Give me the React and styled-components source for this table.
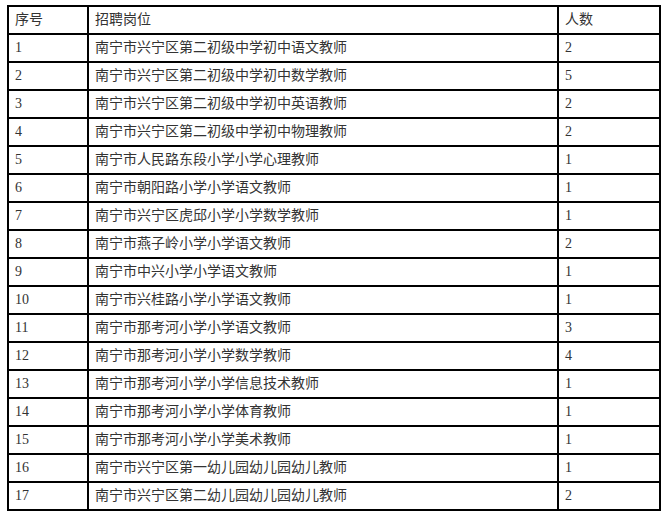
import React from "react";
import styled, { createGlobalStyle } from "styled-components";

const GlobalStyle = createGlobalStyle`
  html, body {
    margin: 0;
    padding: 0;
    background: #fff;
  }
`;

const Page = styled.div`
  padding: 5px 0 0 7px;
`;

const Table = styled.table`
  border-collapse: separate;
  border-spacing: 0;
  table-layout: fixed;
  width: 654px;
  font-family: "Liberation Serif", "Noto Sans CJK SC", serif;
  font-size: 14px;
  color: #333;
`;

const Cell = styled.td`
  box-sizing: border-box;
  height: ${(props) => (props.head ? 30 : 28)}px;
  padding: 0 6px;
  border-right: 2px solid #000;
  border-bottom: 2px solid #000;
  border-top: ${(props) => (props.head ? "2px solid #000" : "none")};
  border-left: ${(props) => (props.first ? "2px solid #000" : "none")};
  vertical-align: middle;
  text-align: left;
  font-weight: normal;
  line-height: 20px;
  white-space: nowrap;
`;

const rows = [
  ["1", "南宁市兴宁区第二初级中学初中语文教师", "2"],
  ["2", "南宁市兴宁区第二初级中学初中数学教师", "5"],
  ["3", "南宁市兴宁区第二初级中学初中英语教师", "2"],
  ["4", "南宁市兴宁区第二初级中学初中物理教师", "2"],
  ["5", "南宁市人民路东段小学小学心理教师", "1"],
  ["6", "南宁市朝阳路小学小学语文教师", "1"],
  ["7", "南宁市兴宁区虎邱小学小学数学教师", "1"],
  ["8", "南宁市燕子岭小学小学语文教师", "2"],
  ["9", "南宁市中兴小学小学语文教师", "1"],
  ["10", "南宁市兴桂路小学小学语文教师", "1"],
  ["11", "南宁市那考河小学小学语文教师", "3"],
  ["12", "南宁市那考河小学小学数学教师", "4"],
  ["13", "南宁市那考河小学小学信息技术教师", "1"],
  ["14", "南宁市那考河小学小学体育教师", "1"],
  ["15", "南宁市那考河小学小学美术教师", "1"],
  ["16", "南宁市兴宁区第一幼儿园幼儿园幼儿教师", "1"],
  ["17", "南宁市兴宁区第二幼儿园幼儿园幼儿教师", "2"],
];

export default function App() {
  return (
    <Page>
      <GlobalStyle />
      <Table>
        <colgroup>
          <col style={{ width: 82 }} />
          <col style={{ width: 470 }} />
          <col style={{ width: 102 }} />
        </colgroup>
        <thead>
          <tr>
            <Cell as="th" head first>序号</Cell>
            <Cell as="th" head>招聘岗位</Cell>
            <Cell as="th" head>人数</Cell>
          </tr>
        </thead>
        <tbody>
          {rows.map(([no, post, count]) => (
            <tr key={no}>
              <Cell first>{no}</Cell>
              <Cell>{post}</Cell>
              <Cell>{count}</Cell>
            </tr>
          ))}
        </tbody>
      </Table>
    </Page>
  );
}
